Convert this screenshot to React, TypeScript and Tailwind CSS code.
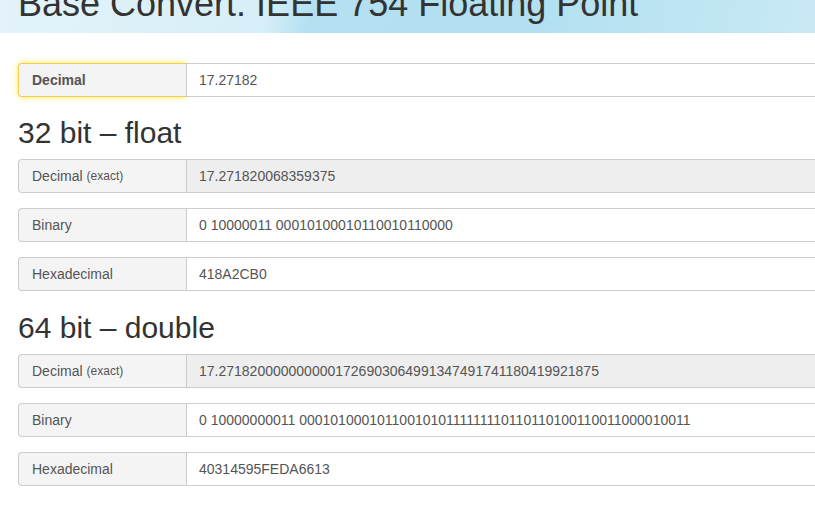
import React from 'react';

type Row = { label: string; note?: string; value: string; readOnly?: boolean };

const float32: Row[] = [
  { label: 'Decimal', note: '(exact)', value: '17.271820068359375', readOnly: true },
  { label: 'Binary', value: '0 10000011 00010100010110010110000' },
  { label: 'Hexadecimal', value: '418A2CB0' },
];

const float64: Row[] = [
  { label: 'Decimal', note: '(exact)', value: '17.2718200000000001726903064991347491741180419921875', readOnly: true },
  { label: 'Binary', value: '0 10000000011 0001010001011001010111111110110110100110011000010011' },
  { label: 'Hexadecimal', value: '40314595FEDA6613' },
];

function InputRow({ row }: { row: Row }) {
  return (
    <div className="flex h-[34px] w-[900px] text-[14px] text-[#555]">
      <div className="flex w-[168px] shrink-0 items-center rounded-l-[4px] border border-r-0 border-[#ccc] bg-[#f4f4f4] pl-[13px]">
        {row.label}
        {row.note && <span className="ml-[4px] text-[12px]">{row.note}</span>}
      </div>
      <div
        className={`flex flex-1 items-center border border-[#ccc] pl-[12px] ${
          row.readOnly ? 'bg-[#eeeeee]' : 'bg-white'
        }`}
      >
        {row.value}
      </div>
    </div>
  );
}

function Section({ title, rows }: { title: string; rows: Row[] }) {
  return (
    <>
      <h2 className="mt-[19px] mb-[10px] h-[33px] text-[30px] leading-[33px] text-[#333]">{title}</h2>
      <div className="flex flex-col gap-[15px]">
        {rows.map((r) => (
          <InputRow key={r.label} row={r} />
        ))}
      </div>
    </>
  );
}

export default function App() {
  return (
    <div className="h-[518px] w-[815px] overflow-hidden bg-white font-['Liberation_Sans',Arial,sans-serif]">
      <div className="h-[33px] overflow-hidden bg-[linear-gradient(105deg,#e4f3fa_0%,#d6eef8_33%,#b4e1f1_38%,#b2e0f1_65%,#c9e9f5_100%)]">
        <h1 className="-mt-[16px] ml-[18px] whitespace-nowrap text-[36px] leading-[40px] text-[#333]">
          Base Convert: IEEE 754 Floating Point
        </h1>
      </div>

      <div className="pl-[18px]">
        <div className="mt-[30px] flex h-[34px] w-[900px] text-[14px] text-[#555]">
          <div className="flex w-[168px] shrink-0 items-center rounded-l-[4px] border border-r-0 border-[#f2cc5a] bg-[#f4f4f4] pl-[13px] font-bold shadow-[0_0_6px_rgba(255,225,0,0.75)]">
            Decimal
          </div>
          <div className="flex flex-1 items-center border border-[#ccc] bg-white pl-[12px]">17.27182</div>
        </div>

        <Section title="32 bit – float" rows={float32} />
        <div className="h-[1px]" />
        <Section title="64 bit – double" rows={float64} />
      </div>
    </div>
  );
}
